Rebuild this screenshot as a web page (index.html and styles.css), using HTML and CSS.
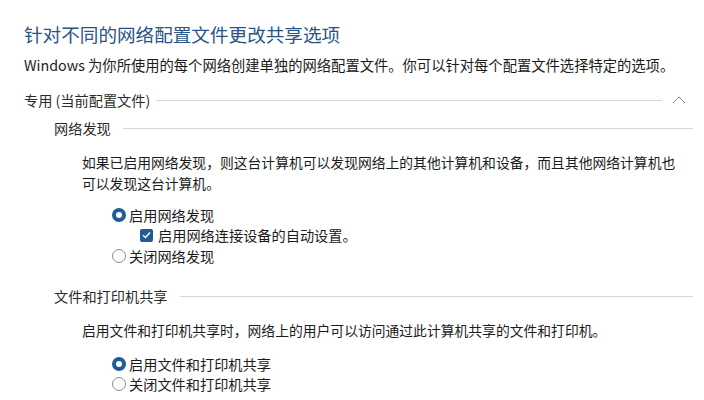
FILE: index.html
```html
<!DOCTYPE html>
<html lang="zh-CN">
<head>
<meta charset="utf-8">
<link rel="stylesheet" href="styles.css">
</head>
<body>
<div class="page">
  <h1 class="title">针对不同的网络配置文件更改共享选项</h1>
  <p class="desc">Windows 为你所使用的每个网络创建单独的网络配置文件。你可以针对每个配置文件选择特定的选项。</p>

  <div class="group-head">
    <span class="group-label">专用 (当前配置文件)</span>
    <span class="rule"></span>
    <span class="chevron"><svg width="14" height="8" viewBox="0 0 14 8"><path d="M1 7 L7 1 L13 7" fill="none" stroke="#8a8a8a" stroke-width="1"/></svg></span>
  </div>

  <div class="section">
    <div class="sec-head"><span class="sec-label">网络发现</span><span class="rule"></span></div>
    <p class="para">如果已启用网络发现，则这台计算机可以发现网络上的其他计算机和设备，而且其他网络计算机也可以发现这台计算机。</p>
    <div class="options">
      <div class="opt"><span class="radio on"></span><span>启用网络发现</span></div>
      <div class="opt sub"><span class="check"><svg width="9" height="8" viewBox="0 0 9 8"><path d="M1 4.2 L3.5 6.5 L8 1.5" fill="none" stroke="#fff" stroke-width="1.4"/></svg></span><span>启用网络连接设备的自动设置。</span></div>
      <div class="opt"><span class="radio"></span><span>关闭网络发现</span></div>
    </div>
  </div>

  <div class="section second">
    <div class="sec-head"><span class="sec-label">文件和打印机共享</span><span class="rule"></span></div>
    <p class="para">启用文件和打印机共享时，网络上的用户可以访问通过此计算机共享的文件和打印机。</p>
    <div class="options">
      <div class="opt"><span class="radio on"></span><span>启用文件和打印机共享</span></div>
      <div class="opt"><span class="radio"></span><span>关闭文件和打印机共享</span></div>
    </div>
  </div>
</div>
</body>
</html>
```

FILE: styles.css
```css
html, body {
  margin: 0;
  padding: 0;
  background: #fff;
}
body {
  font-family: "Noto Sans CJK SC", "Noto Sans", sans-serif;
  color: #1b1b1b;
  font-size: 14.2px;
}
.page {
  padding: 22px 11px 0 24px;
}
.title {
  margin: 0;
  font-size: 18.6px;
  line-height: 24px;
  font-weight: normal;
  color: #2a5485;
}
.desc {
  margin: 9px 0 0 0;
  font-size: 14.3px;
  line-height: 20px;
}
.group-head {
  display: flex;
  align-items: center;
  margin-top: 15px;
  height: 20px;
}
.group-label {
  color: #2b2b2b;
  white-space: nowrap;
}
.rule {
  flex: 1;
  height: 1px;
  background: #d6d6d6;
  margin-left: 6px;
}
.chevron {
  width: 28px;
  display: flex;
  justify-content: center;
  align-items: center;
  margin-left: 3px;
}
.section {
  padding-left: 30px;
  margin-top: 8px;
}
.section.second {
  margin-top: 20px;
}
.sec-head {
  display: flex;
  align-items: center;
  height: 20px;
}
.sec-label {
  color: #2b2b2b;
  white-space: nowrap;
}
.sec-head .rule {
  margin-left: 12px;
}
.para {
  margin: 14px 0 0 28px;
  line-height: 21px;
  max-width: 600px;
  font-size: 13.8px;
}
.options {
  margin: 10.5px 0 0 58px;
  display: flex;
  flex-direction: column;
}
.second .options {
  margin-top: 12.5px;
}
.opt {
  display: flex;
  align-items: center;
  height: 20.5px;
  gap: 3px;
}
.opt.sub {
  padding-left: 28px;
  gap: 5px;
}
.radio {
  width: 14px;
  height: 14px;
  box-sizing: border-box;
  border-radius: 50%;
  border: 1px solid #8c8c8c;
  background: #fff;
}
.radio.on {
  border: 4.5px solid #1f5b98;
  background: #fff;
}
.check {
  width: 13px;
  height: 13px;
  border-radius: 2px;
  background: #1f5b98;
  display: flex;
  align-items: center;
  justify-content: center;
}
```
